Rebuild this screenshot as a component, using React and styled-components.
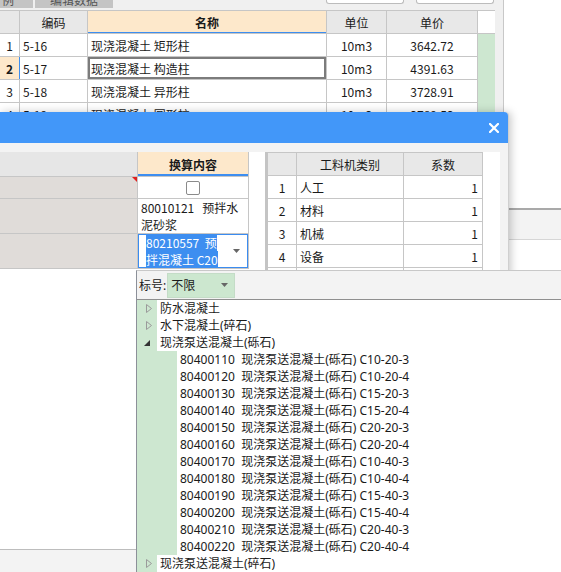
import React from 'react';
import styled, { createGlobalStyle } from 'styled-components';

const GlobalStyle = createGlobalStyle`
  html, body { margin: 0; padding: 0; background: #fff; }
  body {
    font-family: "Noto Sans CJK SC", "Liberation Sans", sans-serif;
    font-size: 12px;
    color: #1a1a1a;
  }
`;

const Screen = styled.div`
  position: relative;
  width: 561px;
  height: 572px;
  overflow: hidden;
  background: #fff;
`;

/* ---------- background application ---------- */

const Backdrop = styled.div`
  display: flex;
  flex-direction: column;
`;

const TopArea = styled.div`
  display: flex;
  height: 208px;
`;

const AppPane = styled.div`
  width: 503px;
  background: #f0f0f0;
  border-right: 1px solid #c8c8c8;
  display: flex;
  flex-direction: column;
`;

const TabStrip = styled.div`
  display: flex;
  align-items: flex-start;
  height: 10px;
  gap: 2px;
`;

const Tab = styled.div`
  width: ${p => p.$w}px;
  height: 8px;
  background: #c4c4c4;
  overflow: hidden;
  color: #555;
  font-size: 12px;
  line-height: 12px;
  text-align: ${p => p.$align || 'center'};
  span { display: block; margin-top: -6px; padding-left: ${p => p.$pad || 0}px; }
`;

const TopButton = styled.div`
  width: 76px;
  height: 3px;
  background: #fff;
  border: 1px solid #bcbcbc;
  border-top: none;
  border-radius: 0 0 3px 3px;
  margin-left: ${p => p.$ml}px;
`;

const Grid = styled.div`
  display: grid;
  grid-template-columns: ${p => p.$cols};
  grid-auto-rows: ${p => p.$row}px;
  gap: 1px;
  background: #c6c6c6;
  padding: ${p => p.$pad || '0'};
  width: max-content;
  align-content: start;
`;

const Cell = styled.div`
  background: ${p => p.$bg || '#fff'};
  display: flex;
  align-items: center;
  justify-content: ${p => p.$align || 'flex-start'};
  padding: 0 ${p => (p.$align === 'flex-end' ? 4 : 3)}px;
  font-weight: ${p => (p.$bold ? 700 : 400)};
  white-space: nowrap;
  overflow: hidden;
  position: relative;
  box-shadow: ${p => p.$shadow || 'none'};
`;

const GreenStrip = styled.div`
  background: #cde7d0;
  grid-column: 6;
  grid-row: 2 / span 4;
`;

const LowerStrip = styled.div`
  height: 29px;
  background: #f3f3f3;
  border-top: 2px solid #a9a9a9;
  border-bottom: 1px solid #d6d6d6;
`;

/* ---------- dialog ---------- */

const Dialog = styled.div`
  position: absolute;
  left: 0;
  top: 112px;
  width: 508px;
  bottom: 0;
  background: #f3f3f3;
  border-right: 1px solid #cfcfcf;
  border-radius: 0 4px 0 0;
  box-shadow: 2px 0 8px rgba(0, 0, 0, 0.22);
  display: flex;
  flex-direction: column;
`;

const TitleBar = styled.div`
  height: 31px;
  background: #4297f9;
  border-radius: 0 4px 0 0;
  display: flex;
  align-items: center;
  justify-content: flex-end;
  padding-right: 9px;
`;

const Panels = styled.div`
  display: flex;
  height: 118px;
  margin-top: 9px;
`;

const LeftPanel = styled.div`
  width: 265px;
  background: #fff;
`;

const Splitter = styled.div`
  width: 3px;
  background: #c4c4c4;
`;

const RightPanel = styled.div`
  width: 232px;
  background: #fff;
  overflow: hidden;
`;

const LowerWhite = styled.div`
  height: 279px;
  background: #fff;
  border-bottom: 1px solid #bdbdbd;
`;

const RedMark = styled.div`
  position: absolute;
  top: 0;
  right: 0;
  width: 0;
  height: 0;
  border-top: 5px solid #e02020;
  border-left: 5px solid transparent;
`;

const Check = styled.div`
  width: 12px;
  height: 12px;
  border: 1px solid #8a8a8a;
  border-radius: 2px;
  background: #fff;
`;

const WrapText = styled.div`
  line-height: 17px;
  white-space: pre;
`;

const Selected = styled.span`
  background: #3d8ef0;
  color: #fff;
`;

const EditCell = styled(Cell)`
  box-shadow: inset 0 0 0 1px #3b8cf0;
  padding-left: 8px;
  justify-content: space-between;
  padding-right: 8px;
`;

/* ---------- popup ---------- */

const Popup = styled.div`
  position: absolute;
  left: 136px;
  top: 270px;
  right: 0;
  bottom: 0;
  background: #fff;
  border-left: 1px solid #8c9099;
  border-top: 1px solid #c8c8c8;
  display: flex;
  flex-direction: column;
  font-family: "Noto Sans", "Noto Sans CJK SC", sans-serif;
`;

const Toolbar = styled.div`
  height: 30px;
  background: #f3f3f3;
  border-bottom: 1px solid #8f8f8f;
  display: flex;
  align-items: center;
  padding-left: 2px;
  gap: 1px;
`;

const Combo = styled.div`
  width: 57px;
  height: 23px;
  background: #cce7cf;
  border: 1px solid #c4dcc7;
  display: flex;
  align-items: center;
  justify-content: space-between;
  padding: 0 6px 0 3px;
`;

const Tree = styled.div`
  display: flex;
  flex-direction: column;
`;

const TreeRow = styled.div`
  display: flex;
  height: 17px;
  align-items: stretch;
`;

const Gutter = styled.div`
  width: ${p => p.$w}px;
  background: #cde7d0;
  display: flex;
  align-items: center;
  justify-content: flex-end;
  padding-right: ${p => p.$pr || 5}px;
  box-sizing: border-box;
`;

const Label = styled.div`
  padding-left: 3px;
  display: flex;
  align-items: center;
  white-space: pre;
  line-height: 17px;
`;

const Collapsed = () => (
  <svg width="6" height="9" viewBox="0 0 6 9">
    <polygon points="0.5,0.5 5.5,4.5 0.5,8.5" fill="none" stroke="#9a9a9a" strokeWidth="1" />
  </svg>
);

const Expanded = () => (
  <svg width="6" height="6" viewBox="0 0 6 6">
    <polygon points="6,0 6,6 0,6" fill="#333" />
  </svg>
);

const CloseIcon = () => (
  <svg width="10" height="10" viewBox="0 0 10 10">
    <path d="M1 1 L9 9 M9 1 L1 9" stroke="#fff" strokeWidth="2.2" strokeLinecap="square" />
  </svg>
);

const Arrow = () => (
  <svg width="7" height="4" viewBox="0 0 7 4">
    <polygon points="0,0 7,0 3.5,4" fill="#666" />
  </svg>
);

const mainRows = [
  ['1', '5-16', '现浇混凝土 矩形柱', '10m3', '3642.72'],
  ['2', '5-17', '现浇混凝土 构造柱', '10m3', '4391.63'],
  ['3', '5-18', '现浇混凝土 异形柱', '10m3', '3728.91'],
  ['4', '5-19', '现浇混凝土 圆形柱', '10m3', '3789.53'],
];

const kinds = [
  ['1', '人工', '1'],
  ['2', '材料', '1'],
  ['3', '机械', '1'],
  ['4', '设备', '1'],
  ['5', '', ''],
];

const grades = [
  'C10-20-3', 'C10-20-4', 'C15-20-3', 'C15-20-4', 'C20-20-3', 'C20-20-4',
  'C10-40-3', 'C10-40-4', 'C15-40-3', 'C15-40-4', 'C20-40-3', 'C20-40-4',
];

export default function App() {
  return (
    <Screen>
      <GlobalStyle />
      <Backdrop>
        <TopArea>
          <AppPane>
            <TabStrip>
              <Tab $w={33} $align="left" $pad={2}><span>例</span></Tab>
              <Tab $w={78}><span>编辑数据</span></Tab>
              <TopButton $ml={211} />
              <TopButton $ml={10} />
            </TabStrip>
            <Grid $cols="19px 67px 238px 59px 90px 17px" $row={22} $pad="1px 0 0 0">
              <Cell $bg="#e8e8e8" />
              <Cell $bg="#e8e8e8" $align="center">编码</Cell>
              <Cell $bg="#fde8cb" $align="center" $bold $shadow="inset 0 -1px 0 #3d8ef0">名称</Cell>
              <Cell $bg="#e8e8e8" $align="center">单位</Cell>
              <Cell $bg="#e8e8e8" $align="center">单价</Cell>
              <Cell />
              {mainRows.map((r, i) => {
                const active = i === 1;
                return (
                  <React.Fragment key={r[0]}>
                    <Cell $bg={active ? '#fde8cb' : '#fff'} $align="center" $bold={active}>{r[0]}</Cell>
                    <Cell $shadow={active ? '-1px 0 0 #3d8ef0' : 'none'}>{r[1]}</Cell>
                    <Cell $shadow={active ? 'inset 0 0 0 2px #7c7c7c' : 'none'}>{r[2]}</Cell>
                    <Cell $align="center">{r[3]}</Cell>
                    <Cell $align="center">{r[4]}</Cell>
                  </React.Fragment>
                );
              })}
              <GreenStrip />
            </Grid>
          </AppPane>
        </TopArea>
        <LowerStrip />
      </Backdrop>

      <Dialog>
        <TitleBar>
          <CloseIcon />
        </TitleBar>
        <Panels>
          <LeftPanel>
            <Grid $cols="137px 110px" $pad="0 1px 1px 0" style={{ gridTemplateRows: '24px 21px 34px 34px' }}>
              <Cell $bg="#e6e6e6" />
              <Cell $bg="#fde8cb" $align="center" $bold $shadow="inset 0 -2px 0 #3d8ef0">换算内容</Cell>
              <Cell $bg="#e0dcd9"><RedMark /></Cell>
              <Cell $align="center"><Check /></Cell>
              <Cell $bg="#e0dcd9" />
              <Cell>
                <WrapText>{'80010121   预拌水\n泥砂浆'}</WrapText>
              </Cell>
              <Cell $bg="#e0dcd9" />
              <EditCell>
                <WrapText>
                  <Selected>80210557  预</Selected>{'\n'}
                  <Selected>拌混凝土 C20</Selected>
                </WrapText>
                <Arrow />
              </EditCell>
            </Grid>
          </LeftPanel>
          <Splitter />
          <RightPanel>
            <Grid $cols="28px 106px 78px" $row={22} $pad="1px 1px 0 0">
              <Cell $bg="#e8e8e8" />
              <Cell $bg="#e8e8e8" $align="center">工料机类别</Cell>
              <Cell $bg="#e8e8e8" $align="center">系数</Cell>
              {kinds.map(k => (
                <React.Fragment key={k[0]}>
                  <Cell $align="center">{k[0] === '5' ? '' : k[0]}</Cell>
                  <Cell>{k[1]}</Cell>
                  <Cell $align="flex-end">{k[2]}</Cell>
                </React.Fragment>
              ))}
            </Grid>
          </RightPanel>
        </Panels>
        <LowerWhite />
      </Dialog>

      <Popup>
        <Toolbar>
          <span>标号:</span>
          <Combo>
            <span>不限</span>
            <Arrow />
          </Combo>
        </Toolbar>
        <Tree>
          <TreeRow>
            <Gutter $w={20}><Collapsed /></Gutter>
            <Label>防水混凝土</Label>
          </TreeRow>
          <TreeRow>
            <Gutter $w={20}><Collapsed /></Gutter>
            <Label>水下混凝土(碎石)</Label>
          </TreeRow>
          <TreeRow>
            <Gutter $w={20} $pr={7}><Expanded /></Gutter>
            <Label>现浇泵送混凝土(砾石)</Label>
          </TreeRow>
          {grades.map((g, i) => (
            <TreeRow key={g + i}>
              <Gutter $w={40} />
              <Label>{`${80400110 + i * 10}  现浇泵送混凝土(砾石) ${g}`}</Label>
            </TreeRow>
          ))}
          <TreeRow>
            <Gutter $w={20}><Collapsed /></Gutter>
            <Label>现浇泵送混凝土(碎石)</Label>
          </TreeRow>
        </Tree>
      </Popup>
    </Screen>
  );
}
